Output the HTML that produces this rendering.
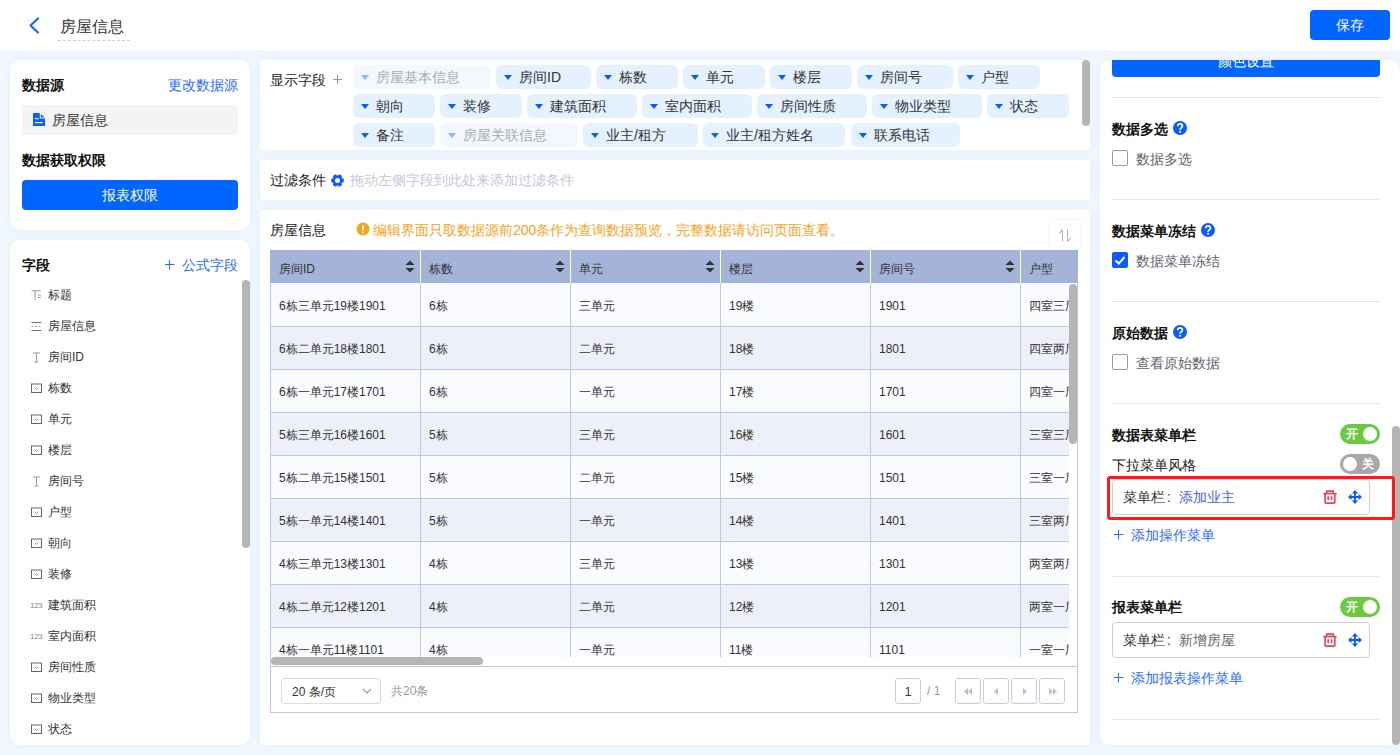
<!DOCTYPE html>
<html><head><meta charset="utf-8">
<style>
*{box-sizing:border-box;margin:0;padding:0}
html,body{width:1400px;height:755px;overflow:hidden;background:#f1f7fe;font-family:"Liberation Sans",sans-serif;color:#333}
.abs{position:absolute}
.t{position:absolute;white-space:nowrap;line-height:16px}
.topbar{position:absolute;left:0;top:0;width:1400px;height:50px;background:#fff}
.card{position:absolute;background:#fff;box-shadow:0 0 6px 1px rgba(222,237,254,.55)}
.b14{font-size:14px;font-weight:bold;color:#111}
.r14{font-size:14px}
.r12{font-size:12px}
.btn{position:absolute;background:#0066ff;color:#fff;border-radius:4px;text-align:center;font-size:14px}
/* tags */
.tags{position:absolute;left:353.3px;width:730px}
.row{position:absolute;left:0;height:24px;display:flex;gap:5.4px}
.tag{height:24px;border-radius:6px;background:#e5f1fe;font-size:14px;color:#333;position:relative;line-height:24px;padding-left:23px;white-space:nowrap}
.tag:before{content:"";position:absolute;left:8px;top:9.5px;border-left:4px solid transparent;border-right:4px solid transparent;border-top:5px solid #0a5cff}
.tag.l{background:#f2f8fe;color:#aaa}
.tag.l:before{border-top-color:#8fb6ff}
/* list */
.fl{position:absolute;left:22px;height:31px;width:210px}
.fl .ic{position:absolute;left:9px;top:10px;width:11px;height:11px}
.fl .tx{position:absolute;left:26px;top:7px;font-size:12px;line-height:16px;color:#333}
/* table */
.grid{position:absolute;left:270px;top:250px}
.hd{position:absolute;top:0;height:33px;background:#a3b4d8}
.hc{position:absolute;top:0;height:33px;font-size:12px;color:#333;line-height:33px;padding-left:9px}
.cell{position:absolute;font-size:12px;color:#333;line-height:16px;white-space:nowrap}
.sec-t{position:absolute;left:12px;font-size:14px;font-weight:bold;color:#111;line-height:16px}
.divd{position:absolute;left:12px;width:268px;height:1px;background:#e6e6e6}
.help{position:absolute;width:14px;height:14px}
.cb{position:absolute;left:12px;width:16px;height:16px;border:1.5px solid #9a9aaa;border-radius:2px;background:#fff}
.cbl{position:absolute;left:36px;font-size:14px;color:#5f6470;line-height:16px}
.tog{position:absolute;left:240px;width:40px;height:20px;border-radius:10px;background:#6cc940}
.tog .k{position:absolute;top:3px;width:14px;height:14px;border-radius:50%;background:#fff}
.tog .w{position:absolute;top:2px;font-size:12px;color:#fff;line-height:16px;font-weight:bold}
.mbox{position:absolute;left:12px;width:258px;height:36px;border:1px solid #d0d0d0;border-radius:4px;background:#fff}
.mbox .tx{position:absolute;left:10px;top:9px;font-size:14px;line-height:16px;color:#333}
.colon{display:inline-block;width:14px;padding-left:2px}
.add{position:absolute;left:12px;font-size:14px;color:#2f6bff;line-height:16px}
.pbtn{position:absolute;top:678px;width:25.5px;height:26px;border:1px solid #c3cde6;border-radius:3px;background:#fff}
</style></head><body>
<div class="topbar">
  <svg class="abs" style="left:28px;top:17px" width="12" height="17" viewBox="0 0 12 17"><path d="M10 1.5 L2.5 8.5 L10 15.5" fill="none" stroke="#1a66ff" stroke-width="2.2" stroke-linecap="round" stroke-linejoin="round"/></svg>
  <div class="t" style="left:60px;top:18px;font-size:16px;line-height:18px;color:#333">房屋信息</div>
  <div class="abs" style="left:58px;top:40px;width:72px;border-top:1px dashed #d0d0d0"></div>
  <div class="btn" style="left:1310px;top:10px;width:80px;height:30px;line-height:30px">保存</div>
</div>

<!-- left card 1 -->
<div class="card" style="left:10px;top:60px;width:240px;height:170px;border-radius:10px">
  <div class="t b14" style="left:12px;top:17px">数据源</div>
  <div class="t r14" style="left:158px;top:17px;color:#2a6cff">更改数据源</div>
  <div class="abs" style="left:12px;top:45px;width:216px;height:30px;background:#f4f4f4;border-radius:2px">
    <svg class="abs" style="left:11px;top:8px" width="12" height="13" viewBox="0 0 12 13"><path d="M0 0 H6.8 V5.6 H12 V13 H0 Z" fill="#0a5cff"/><path d="M7.9 1 L11.6 4.6 H7.9 Z" fill="#0a5cff"/><rect x="1.8" y="5.1" width="3.8" height="1.1" fill="#fff"/><rect x="1.8" y="9.1" width="8" height="1.1" fill="#fff"/></svg>
    <div class="t r14" style="left:30px;top:7px;color:#333">房屋信息</div>
  </div>
  <div class="t b14" style="left:12px;top:92px">数据获取权限</div>
  <div class="btn" style="left:12px;top:120px;width:216px;height:30px;line-height:30px">报表权限</div>
</div>

<!-- left card 2 -->
<div class="card" style="left:10px;top:240px;width:240px;height:505px;border-radius:10px;overflow:hidden">
  <div class="t b14" style="left:12px;top:17px">字段</div>
  <div class="t r14" style="left:155px;top:17px;color:#2a6cff;padding-left:17px"><svg style="position:absolute;left:0;top:3px" width="10" height="10" viewBox="0 0 10 10"><path d="M4.5 0 V9.5 M-0.5 4.5 H9.5" stroke="#2a6cff" stroke-width="1"/></svg>公式字段</div>
  <div class="abs" style="left:232px;top:40px;width:8px;height:268px;border-radius:4px;background:#b5b5b5"></div>
</div>
<div class="abs" style="left:0;top:0;width:240px;height:745px;overflow:hidden"><div class="fl" style="top:280px"><svg class="ic" viewBox="0 0 11 11"><path d="M0.5 0.8 H9.5 M4 0.8 V10.2 M6.8 5 H9.8 M6.8 7.5 H9.8" fill="none" stroke="#999" stroke-width="1"/></svg><div class="tx">标题</div></div><div class="fl" style="top:311px"><svg class="ic" viewBox="0 0 11 11"><path d="M0.5 1.5 H10.5 M0.5 9.5 H10.5" fill="none" stroke="#777" stroke-width="1"/><path d="M0.5 5.5 H10.5" fill="none" stroke="#999" stroke-width="1" stroke-dasharray="2 1.5"/></svg><div class="tx">房屋信息</div></div><div class="fl" style="top:342px"><svg class="ic" viewBox="0 0 11 11"><path d="M2 1 H9 M5.5 1 V10 M3.5 10 H7.5" fill="none" stroke="#999" stroke-width="1"/></svg><div class="tx">房间ID</div></div><div class="fl" style="top:373px"><svg class="ic" viewBox="0 0 11 11"><rect x="0.5" y="1" width="10" height="8.5" fill="none" stroke="#666" stroke-width="1"/><path d="M3.5 4.5 L5.5 6.5 L7.5 4.5" fill="none" stroke="#888" stroke-width="0.9"/></svg><div class="tx">栋数</div></div><div class="fl" style="top:404px"><svg class="ic" viewBox="0 0 11 11"><rect x="0.5" y="1" width="10" height="8.5" fill="none" stroke="#666" stroke-width="1"/><path d="M3.5 4.5 L5.5 6.5 L7.5 4.5" fill="none" stroke="#888" stroke-width="0.9"/></svg><div class="tx">单元</div></div><div class="fl" style="top:435px"><svg class="ic" viewBox="0 0 11 11"><rect x="0.5" y="1" width="10" height="8.5" fill="none" stroke="#666" stroke-width="1"/><path d="M3.5 4.5 L5.5 6.5 L7.5 4.5" fill="none" stroke="#888" stroke-width="0.9"/></svg><div class="tx">楼层</div></div><div class="fl" style="top:466px"><svg class="ic" viewBox="0 0 11 11"><path d="M2 1 H9 M5.5 1 V10 M3.5 10 H7.5" fill="none" stroke="#999" stroke-width="1"/></svg><div class="tx">房间号</div></div><div class="fl" style="top:497px"><svg class="ic" viewBox="0 0 11 11"><rect x="0.5" y="1" width="10" height="8.5" fill="none" stroke="#666" stroke-width="1"/><path d="M3.5 4.5 L5.5 6.5 L7.5 4.5" fill="none" stroke="#888" stroke-width="0.9"/></svg><div class="tx">户型</div></div><div class="fl" style="top:528px"><svg class="ic" viewBox="0 0 11 11"><rect x="0.5" y="1" width="10" height="8.5" fill="none" stroke="#666" stroke-width="1"/><path d="M3.5 4.5 L5.5 6.5 L7.5 4.5" fill="none" stroke="#888" stroke-width="0.9"/></svg><div class="tx">朝向</div></div><div class="fl" style="top:559px"><svg class="ic" viewBox="0 0 11 11"><rect x="0.5" y="1" width="10" height="8.5" fill="none" stroke="#666" stroke-width="1"/><path d="M3.5 4.5 L5.5 6.5 L7.5 4.5" fill="none" stroke="#888" stroke-width="0.9"/></svg><div class="tx">装修</div></div><div class="fl" style="top:590px"><div class="ic" style="font-size:8px;line-height:11px;color:#888;left:8px;letter-spacing:-0.3px">123</div><div class="tx">建筑面积</div></div><div class="fl" style="top:621px"><div class="ic" style="font-size:8px;line-height:11px;color:#888;left:8px;letter-spacing:-0.3px">123</div><div class="tx">室内面积</div></div><div class="fl" style="top:652px"><svg class="ic" viewBox="0 0 11 11"><rect x="0.5" y="1" width="10" height="8.5" fill="none" stroke="#666" stroke-width="1"/><path d="M3.5 4.5 L5.5 6.5 L7.5 4.5" fill="none" stroke="#888" stroke-width="0.9"/></svg><div class="tx">房间性质</div></div><div class="fl" style="top:683px"><svg class="ic" viewBox="0 0 11 11"><rect x="0.5" y="1" width="10" height="8.5" fill="none" stroke="#666" stroke-width="1"/><path d="M3.5 4.5 L5.5 6.5 L7.5 4.5" fill="none" stroke="#888" stroke-width="0.9"/></svg><div class="tx">物业类型</div></div><div class="fl" style="top:714px"><svg class="ic" viewBox="0 0 11 11"><rect x="0.5" y="1" width="10" height="8.5" fill="none" stroke="#666" stroke-width="1"/><path d="M3.5 4.5 L5.5 6.5 L7.5 4.5" fill="none" stroke="#888" stroke-width="0.9"/></svg><div class="tx">状态</div></div></div>

<!-- mid card 1: display fields -->
<div class="card" style="left:260px;top:60px;width:830px;height:90px;border-radius:4px">
  <div class="t r14" style="left:10px;top:12px;color:#222">显示字段</div>
  <svg class="abs" style="left:73px;top:15px" width="9" height="9" viewBox="0 0 9 9"><path d="M4.5 0 V9 M0 4.5 H9" stroke="#999" stroke-width="1"/></svg>
  <div class="abs" style="left:822px;top:0px;width:8px;height:66px;border-radius:4px;background:#b5b5b5"></div>
</div>
<div class="tags" style="top:65px">
  <div class="row" style="top:0">
    <div class="tag l" style="width:137.4px">房屋基本信息</div>
    <div class="tag" style="width:95px">房间ID</div>
    <div class="tag" style="width:81.5px">栋数</div>
    <div class="tag" style="width:81.5px">单元</div>
    <div class="tag" style="width:81.5px">楼层</div>
    <div class="tag" style="width:95.5px">房间号</div>
    <div class="tag" style="width:81.5px">户型</div>
  </div>
  <div class="row" style="top:29px">
    <div class="tag" style="width:81.5px">朝向</div>
    <div class="tag" style="width:81.5px">装修</div>
    <div class="tag" style="width:109.6px">建筑面积</div>
    <div class="tag" style="width:109.6px">室内面积</div>
    <div class="tag" style="width:109.6px">房间性质</div>
    <div class="tag" style="width:109.6px">物业类型</div>
    <div class="tag" style="width:81.5px">状态</div>
  </div>
  <div class="row" style="top:58px">
    <div class="tag" style="width:81.5px">备注</div>
    <div class="tag l" style="width:137.4px">房屋关联信息</div>
    <div class="tag" style="width:114.6px">业主/租方</div>
    <div class="tag" style="width:142.4px">业主/租方姓名</div>
    <div class="tag" style="width:109.6px">联系电话</div>
  </div>
</div>

<!-- mid card 2: filter -->
<div class="card" style="left:260px;top:160px;width:830px;height:40px;border-radius:4px">
  <div class="t r14" style="left:10px;top:12px;color:#222">过滤条件</div>
  <svg class="abs" style="left:71px;top:13.5px" width="13" height="13" viewBox="0 0 13 13"><circle cx="6.5" cy="6.5" r="5" fill="#0a5cff"/><rect x="4.6" y="0.2" width="3.8" height="3" rx="0.8" fill="#0a5cff" transform="rotate(30 6.5 6.5)"/><rect x="4.6" y="0.2" width="3.8" height="3" rx="0.8" fill="#0a5cff" transform="rotate(90 6.5 6.5)"/><rect x="4.6" y="0.2" width="3.8" height="3" rx="0.8" fill="#0a5cff" transform="rotate(150 6.5 6.5)"/><rect x="4.6" y="0.2" width="3.8" height="3" rx="0.8" fill="#0a5cff" transform="rotate(210 6.5 6.5)"/><rect x="4.6" y="0.2" width="3.8" height="3" rx="0.8" fill="#0a5cff" transform="rotate(270 6.5 6.5)"/><rect x="4.6" y="0.2" width="3.8" height="3" rx="0.8" fill="#0a5cff" transform="rotate(330 6.5 6.5)"/><circle cx="6.5" cy="6.5" r="2.5" fill="#fff"/></svg>
  <div class="t r14" style="left:90px;top:12px;color:#c2cad8">拖动左侧字段到此处来添加过滤条件</div>
</div>

<!-- mid card 3: table -->
<div class="card" style="left:260px;top:210px;width:830px;height:535px;border-radius:4px">
  <div class="t r14" style="left:10px;top:12px;color:#222">房屋信息</div>
  <svg class="abs" style="left:96px;top:12px" width="14" height="14" viewBox="0 0 14 14"><circle cx="7" cy="7" r="6.5" fill="#fba21c"/><rect x="6" y="3" width="2" height="5.5" rx="1" fill="#fff"/><circle cx="7" cy="10.5" r="1.1" fill="#fff"/></svg>
  <div class="t r14" style="left:113px;top:12px;color:#fba21c">编辑界面只取数据源前200条作为查询数据预览，完整数据请访问页面查看。</div>
  <div class="abs" style="left:790px;top:10px;width:30px;height:30px;background:#fff;box-shadow:0 0 4px rgba(0,0,0,.08)">
    <svg class="abs" style="left:8px;top:9px" width="14" height="13" viewBox="0 0 14 13"><path d="M4.5 0.5 V12.5 M4.5 0.5 L1 4.5 M9.5 0.5 V12.5 M9.5 12.5 L13 8.5" fill="none" stroke="#b5b5b5" stroke-width="1.1"/></svg>
  </div>
</div>
<div class="abs" style="left:270px;top:250px;width:808px;height:463px;border:1px solid #bcc8e6;border-top:none"></div><div class="abs" style="left:270px;top:250px;width:808px;height:33px;background:#a3b4d8"></div><div class="cell" style="left:279px;top:11px;top:261px">房间ID</div><svg class="abs" style="left:405px;top:260px" width="10" height="13" viewBox="0 0 10 13"><path d="M5 0.5 L9.5 5 H0.5Z M5 12.5 L9.5 8 H0.5Z" fill="#333"/></svg><div class="cell" style="left:429px;top:11px;top:261px">栋数</div><svg class="abs" style="left:555px;top:260px" width="10" height="13" viewBox="0 0 10 13"><path d="M5 0.5 L9.5 5 H0.5Z M5 12.5 L9.5 8 H0.5Z" fill="#333"/></svg><div class="cell" style="left:579px;top:11px;top:261px">单元</div><svg class="abs" style="left:705px;top:260px" width="10" height="13" viewBox="0 0 10 13"><path d="M5 0.5 L9.5 5 H0.5Z M5 12.5 L9.5 8 H0.5Z" fill="#333"/></svg><div class="cell" style="left:729px;top:11px;top:261px">楼层</div><svg class="abs" style="left:855px;top:260px" width="10" height="13" viewBox="0 0 10 13"><path d="M5 0.5 L9.5 5 H0.5Z M5 12.5 L9.5 8 H0.5Z" fill="#333"/></svg><div class="cell" style="left:879px;top:11px;top:261px">房间号</div><svg class="abs" style="left:1005px;top:260px" width="10" height="13" viewBox="0 0 10 13"><path d="M5 0.5 L9.5 5 H0.5Z M5 12.5 L9.5 8 H0.5Z" fill="#333"/></svg><div class="cell" style="left:1029px;top:11px;top:261px">户型</div><div class="abs" style="left:420px;top:250px;width:1px;height:33px;background:#fff"></div><div class="abs" style="left:570px;top:250px;width:1px;height:33px;background:#fff"></div><div class="abs" style="left:720px;top:250px;width:1px;height:33px;background:#fff"></div><div class="abs" style="left:870px;top:250px;width:1px;height:33px;background:#fff"></div><div class="abs" style="left:1020px;top:250px;width:1px;height:33px;background:#fff"></div><div class="abs" style="left:270px;top:283px;width:799px;height:374px;overflow:hidden"><div class="abs" style="left:0;top:0px;width:900px;height:43px;background:#fafbfe;border-top:0px solid #bcc8e6"></div><div class="cell" style="left:9px;top:15px">6栋三单元19楼1901</div><div class="cell" style="left:159px;top:15px">6栋</div><div class="cell" style="left:309px;top:15px">三单元</div><div class="cell" style="left:459px;top:15px">19楼</div><div class="cell" style="left:609px;top:15px">1901</div><div class="cell" style="left:759px;top:15px">四室三厅</div><div class="abs" style="left:0;top:43px;width:900px;height:43px;background:#eef0f9;border-top:1px solid #bcc8e6"></div><div class="cell" style="left:9px;top:58px">6栋二单元18楼1801</div><div class="cell" style="left:159px;top:58px">6栋</div><div class="cell" style="left:309px;top:58px">二单元</div><div class="cell" style="left:459px;top:58px">18楼</div><div class="cell" style="left:609px;top:58px">1801</div><div class="cell" style="left:759px;top:58px">四室两厅</div><div class="abs" style="left:0;top:86px;width:900px;height:43px;background:#fafbfe;border-top:1px solid #bcc8e6"></div><div class="cell" style="left:9px;top:101px">6栋一单元17楼1701</div><div class="cell" style="left:159px;top:101px">6栋</div><div class="cell" style="left:309px;top:101px">一单元</div><div class="cell" style="left:459px;top:101px">17楼</div><div class="cell" style="left:609px;top:101px">1701</div><div class="cell" style="left:759px;top:101px">四室一厅</div><div class="abs" style="left:0;top:129px;width:900px;height:43px;background:#eef0f9;border-top:1px solid #bcc8e6"></div><div class="cell" style="left:9px;top:144px">5栋三单元16楼1601</div><div class="cell" style="left:159px;top:144px">5栋</div><div class="cell" style="left:309px;top:144px">三单元</div><div class="cell" style="left:459px;top:144px">16楼</div><div class="cell" style="left:609px;top:144px">1601</div><div class="cell" style="left:759px;top:144px">三室三厅</div><div class="abs" style="left:0;top:172px;width:900px;height:43px;background:#fafbfe;border-top:1px solid #bcc8e6"></div><div class="cell" style="left:9px;top:187px">5栋二单元15楼1501</div><div class="cell" style="left:159px;top:187px">5栋</div><div class="cell" style="left:309px;top:187px">二单元</div><div class="cell" style="left:459px;top:187px">15楼</div><div class="cell" style="left:609px;top:187px">1501</div><div class="cell" style="left:759px;top:187px">三室一厅</div><div class="abs" style="left:0;top:215px;width:900px;height:43px;background:#eef0f9;border-top:1px solid #bcc8e6"></div><div class="cell" style="left:9px;top:230px">5栋一单元14楼1401</div><div class="cell" style="left:159px;top:230px">5栋</div><div class="cell" style="left:309px;top:230px">一单元</div><div class="cell" style="left:459px;top:230px">14楼</div><div class="cell" style="left:609px;top:230px">1401</div><div class="cell" style="left:759px;top:230px">三室两厅</div><div class="abs" style="left:0;top:258px;width:900px;height:43px;background:#fafbfe;border-top:1px solid #bcc8e6"></div><div class="cell" style="left:9px;top:273px">4栋三单元13楼1301</div><div class="cell" style="left:159px;top:273px">4栋</div><div class="cell" style="left:309px;top:273px">三单元</div><div class="cell" style="left:459px;top:273px">13楼</div><div class="cell" style="left:609px;top:273px">1301</div><div class="cell" style="left:759px;top:273px">两室两厅</div><div class="abs" style="left:0;top:301px;width:900px;height:43px;background:#eef0f9;border-top:1px solid #bcc8e6"></div><div class="cell" style="left:9px;top:316px">4栋二单元12楼1201</div><div class="cell" style="left:159px;top:316px">4栋</div><div class="cell" style="left:309px;top:316px">二单元</div><div class="cell" style="left:459px;top:316px">12楼</div><div class="cell" style="left:609px;top:316px">1201</div><div class="cell" style="left:759px;top:316px">两室一厅</div><div class="abs" style="left:0;top:344px;width:900px;height:43px;background:#fafbfe;border-top:1px solid #bcc8e6"></div><div class="cell" style="left:9px;top:359px">4栋一单元11楼1101</div><div class="cell" style="left:159px;top:359px">4栋</div><div class="cell" style="left:309px;top:359px">一单元</div><div class="cell" style="left:459px;top:359px">11楼</div><div class="cell" style="left:609px;top:359px">1101</div><div class="cell" style="left:759px;top:359px">一室一厅</div><div class="abs" style="left:150px;top:0;width:1px;height:400px;background:#bcc8e6"></div><div class="abs" style="left:300px;top:0;width:1px;height:400px;background:#bcc8e6"></div><div class="abs" style="left:450px;top:0;width:1px;height:400px;background:#bcc8e6"></div><div class="abs" style="left:600px;top:0;width:1px;height:400px;background:#bcc8e6"></div><div class="abs" style="left:750px;top:0;width:1px;height:400px;background:#bcc8e6"></div></div><div class="abs" style="left:270px;top:283px;width:1px;height:383px;background:#bcc8e6"></div><div class="abs" style="left:271px;top:657px;width:212px;height:8px;border-radius:4px;background:#b5b5b5"></div><div class="abs" style="left:1069px;top:284px;width:8px;height:160px;border-radius:4px;background:#b5b5b5"></div><div class="abs" style="left:270px;top:666px;width:808px;height:1px;background:#bcc8e6"></div><div class="abs" style="left:281px;top:678px;width:100px;height:26px;border:1px solid #dcdcdc;border-radius:3px;background:#fff"><div class="cell" style="left:10px;top:5px">20 条/页</div><svg class="abs" style="left:80px;top:9px" width="10" height="7" viewBox="0 0 10 7"><path d="M1 1 L5 5 L9 1" fill="none" stroke="#999" stroke-width="1.1"/></svg></div><div class="cell" style="left:391px;top:683px;color:#999">共20条</div><div class="abs" style="left:895px;top:678px;width:26px;height:26px;border:1px solid #c3cde6;border-radius:3px;background:#fff"><div class="cell" style="left:0;width:24px;text-align:center;top:5px">1</div></div><div class="cell" style="left:927px;top:683px;color:#999">/ 1</div><div class="pbtn" style="left:955.1px"><svg class="abs" style="left:5px;top:6px" width="14" height="13" viewBox="0 0 14 13"><path d="M7 3 L3 6.5 L7 10Z M11 3 L7 6.5 L11 10Z" fill="#b4c0dc"/></svg></div><div class="pbtn" style="left:983.2px"><svg class="abs" style="left:5px;top:6px" width="14" height="13" viewBox="0 0 14 13"><path d="M9 3 L5 6.5 L9 10Z" fill="#b4c0dc"/></svg></div><div class="pbtn" style="left:1011.2px"><svg class="abs" style="left:5px;top:6px" width="14" height="13" viewBox="0 0 14 13"><path d="M6 3 L10 6.5 L6 10Z" fill="#b4c0dc"/></svg></div><div class="pbtn" style="left:1039.2px"><svg class="abs" style="left:5px;top:6px" width="14" height="13" viewBox="0 0 14 13"><path d="M4 3 L8 6.5 L4 10Z M8 3 L12 6.5 L8 10Z" fill="#b4c0dc"/></svg></div>

<!-- right card -->
<div class="card" id="rc" style="left:1100px;top:60px;width:300px;height:685px;border-radius:10px;overflow:hidden">
  <div class="btn" style="left:12px;top:-13px;width:268px;height:30px;line-height:28px">颜色设置</div>
  <div class="divd" style="top:37px"></div>
  <div class="sec-t" style="top:61px">数据多选</div>
  <div class="help" style="left:73px;top:61px"><svg width="14" height="14" viewBox="0 0 14 14" style="position:absolute;left:0;top:0"><circle cx="7" cy="7" r="7" fill="#0a5cff"/><path d="M4.7 5.2 Q4.7 2.8 7 2.8 Q9.4 2.8 9.4 5 Q9.4 6.2 8.1 6.9 Q7.1 7.4 7.1 8.7" fill="none" stroke="#fff" stroke-width="1.7"/><rect x="6.2" y="9.9" width="1.8" height="1.8" fill="#fff"/></svg></div>
  <div class="cb" style="top:90px"></div>
  <div class="cbl" style="top:91px">数据多选</div>
  <div class="divd" style="top:139px"></div>

  <div class="sec-t" style="top:163px">数据菜单冻结</div>
  <div class="help" style="left:101px;top:163px"><svg width="14" height="14" viewBox="0 0 14 14" style="position:absolute;left:0;top:0"><circle cx="7" cy="7" r="7" fill="#0a5cff"/><path d="M4.7 5.2 Q4.7 2.8 7 2.8 Q9.4 2.8 9.4 5 Q9.4 6.2 8.1 6.9 Q7.1 7.4 7.1 8.7" fill="none" stroke="#fff" stroke-width="1.7"/><rect x="6.2" y="9.9" width="1.8" height="1.8" fill="#fff"/></svg></div>
  <div class="cb" style="top:192px;background:#0a5cff;border-color:#0a5cff"><svg class="abs" style="left:1px;top:1.5px" width="12" height="11" viewBox="0 0 12 11"><path d="M1.5 5.5 L4.8 8.6 L10.5 2" fill="none" stroke="#fff" stroke-width="2"/></svg></div>
  <div class="cbl" style="top:193px">数据菜单冻结</div>
  <div class="divd" style="top:241px"></div>

  <div class="sec-t" style="top:265px">原始数据</div>
  <div class="help" style="left:73px;top:265px"><svg width="14" height="14" viewBox="0 0 14 14" style="position:absolute;left:0;top:0"><circle cx="7" cy="7" r="7" fill="#0a5cff"/><path d="M4.7 5.2 Q4.7 2.8 7 2.8 Q9.4 2.8 9.4 5 Q9.4 6.2 8.1 6.9 Q7.1 7.4 7.1 8.7" fill="none" stroke="#fff" stroke-width="1.7"/><rect x="6.2" y="9.9" width="1.8" height="1.8" fill="#fff"/></svg></div>
  <div class="cb" style="top:294px"></div>
  <div class="cbl" style="top:295px">查看原始数据</div>
  <div class="divd" style="top:343px"></div>

  <div class="sec-t" style="top:367px">数据表菜单栏</div>
  <div class="tog" style="top:364px"><div class="w" style="left:6px">开</div><div class="k" style="left:23px"></div></div>
  <div class="t r14" style="left:12px;top:397px;color:#222">下拉菜单风格</div>
  <div class="tog" style="top:394px;background:#a8a8a8"><div class="k" style="left:3px"></div><div class="w" style="left:22px">关</div></div>
    <div class="mbox" style="top:419px"><div class="tx">菜单栏<span class="colon">:</span><span style="color:#4f62dc">添加业主</span></div>
    <svg class="abs" style="left:210px;top:10px" width="14" height="14" viewBox="0 0 14 14"><path d="M0.3 3.7 H13.7 M3.6 3.5 V1.1 H10.2 V3.5 M2.1 3.7 V12.2 Q2.1 13.1 3 13.1 H10.9 Q11.8 13.1 11.8 12.2 V3.7 M5.2 6.3 V10.3 M8.6 6.3 V10.3" fill="none" stroke="#e5475c" stroke-width="1.7"/></svg>
    <svg class="abs" style="left:235px;top:9.5px" width="14" height="14" viewBox="0 0 14 14"><path d="M7 2 V12 M2 7 H12" stroke="#0a5cff" stroke-width="1.9"/><path d="M7 0 L10.2 3.4 H3.8Z M7 14 L10.2 10.6 H3.8Z M0 7 L3.4 3.8 V10.2Z M14 7 L10.6 3.8 V10.2Z" fill="#0a5cff"/></svg>
  </div>
  <div class="add" style="top:467px;padding-left:19px"><svg style="position:absolute;left:2px;top:3px" width="10" height="10" viewBox="0 0 10 10"><path d="M4.5 0 V9.5 M-0.5 4.5 H9.5" stroke="#2f6bff" stroke-width="1"/></svg>添加操作菜单</div>
  <div class="divd" style="top:516px"></div>

  <div class="sec-t" style="top:539px">报表菜单栏</div>
  <div class="tog" style="top:537px"><div class="w" style="left:6px">开</div><div class="k" style="left:23px"></div></div>
  <div class="mbox" style="top:562px"><div class="tx">菜单栏<span class="colon">:</span><span style="color:#666">新增房屋</span></div>
    <svg class="abs" style="left:210px;top:10px" width="14" height="14" viewBox="0 0 14 14"><path d="M0.3 3.7 H13.7 M3.6 3.5 V1.1 H10.2 V3.5 M2.1 3.7 V12.2 Q2.1 13.1 3 13.1 H10.9 Q11.8 13.1 11.8 12.2 V3.7 M5.2 6.3 V10.3 M8.6 6.3 V10.3" fill="none" stroke="#e5475c" stroke-width="1.7"/></svg>
    <svg class="abs" style="left:235px;top:9.5px" width="14" height="14" viewBox="0 0 14 14"><path d="M7 2 V12 M2 7 H12" stroke="#0a5cff" stroke-width="1.9"/><path d="M7 0 L10.2 3.4 H3.8Z M7 14 L10.2 10.6 H3.8Z M0 7 L3.4 3.8 V10.2Z M14 7 L10.6 3.8 V10.2Z" fill="#0a5cff"/></svg>
  </div>
  <div class="add" style="top:610px;padding-left:19px"><svg style="position:absolute;left:2px;top:3px" width="10" height="10" viewBox="0 0 10 10"><path d="M4.5 0 V9.5 M-0.5 4.5 H9.5" stroke="#2f6bff" stroke-width="1"/></svg>添加报表操作菜单</div>
  <div class="divd" style="top:659px"></div>
  
  
</div>
<div class="abs" style="left:1392px;top:426px;width:8px;height:319px;border-radius:4px;background:#b5b5b5"></div>
<div class="abs" style="left:1106.5px;top:476px;width:288.5px;height:44px;border:3px solid #ff1a1a;border-radius:3px"></div>
</body></html>
